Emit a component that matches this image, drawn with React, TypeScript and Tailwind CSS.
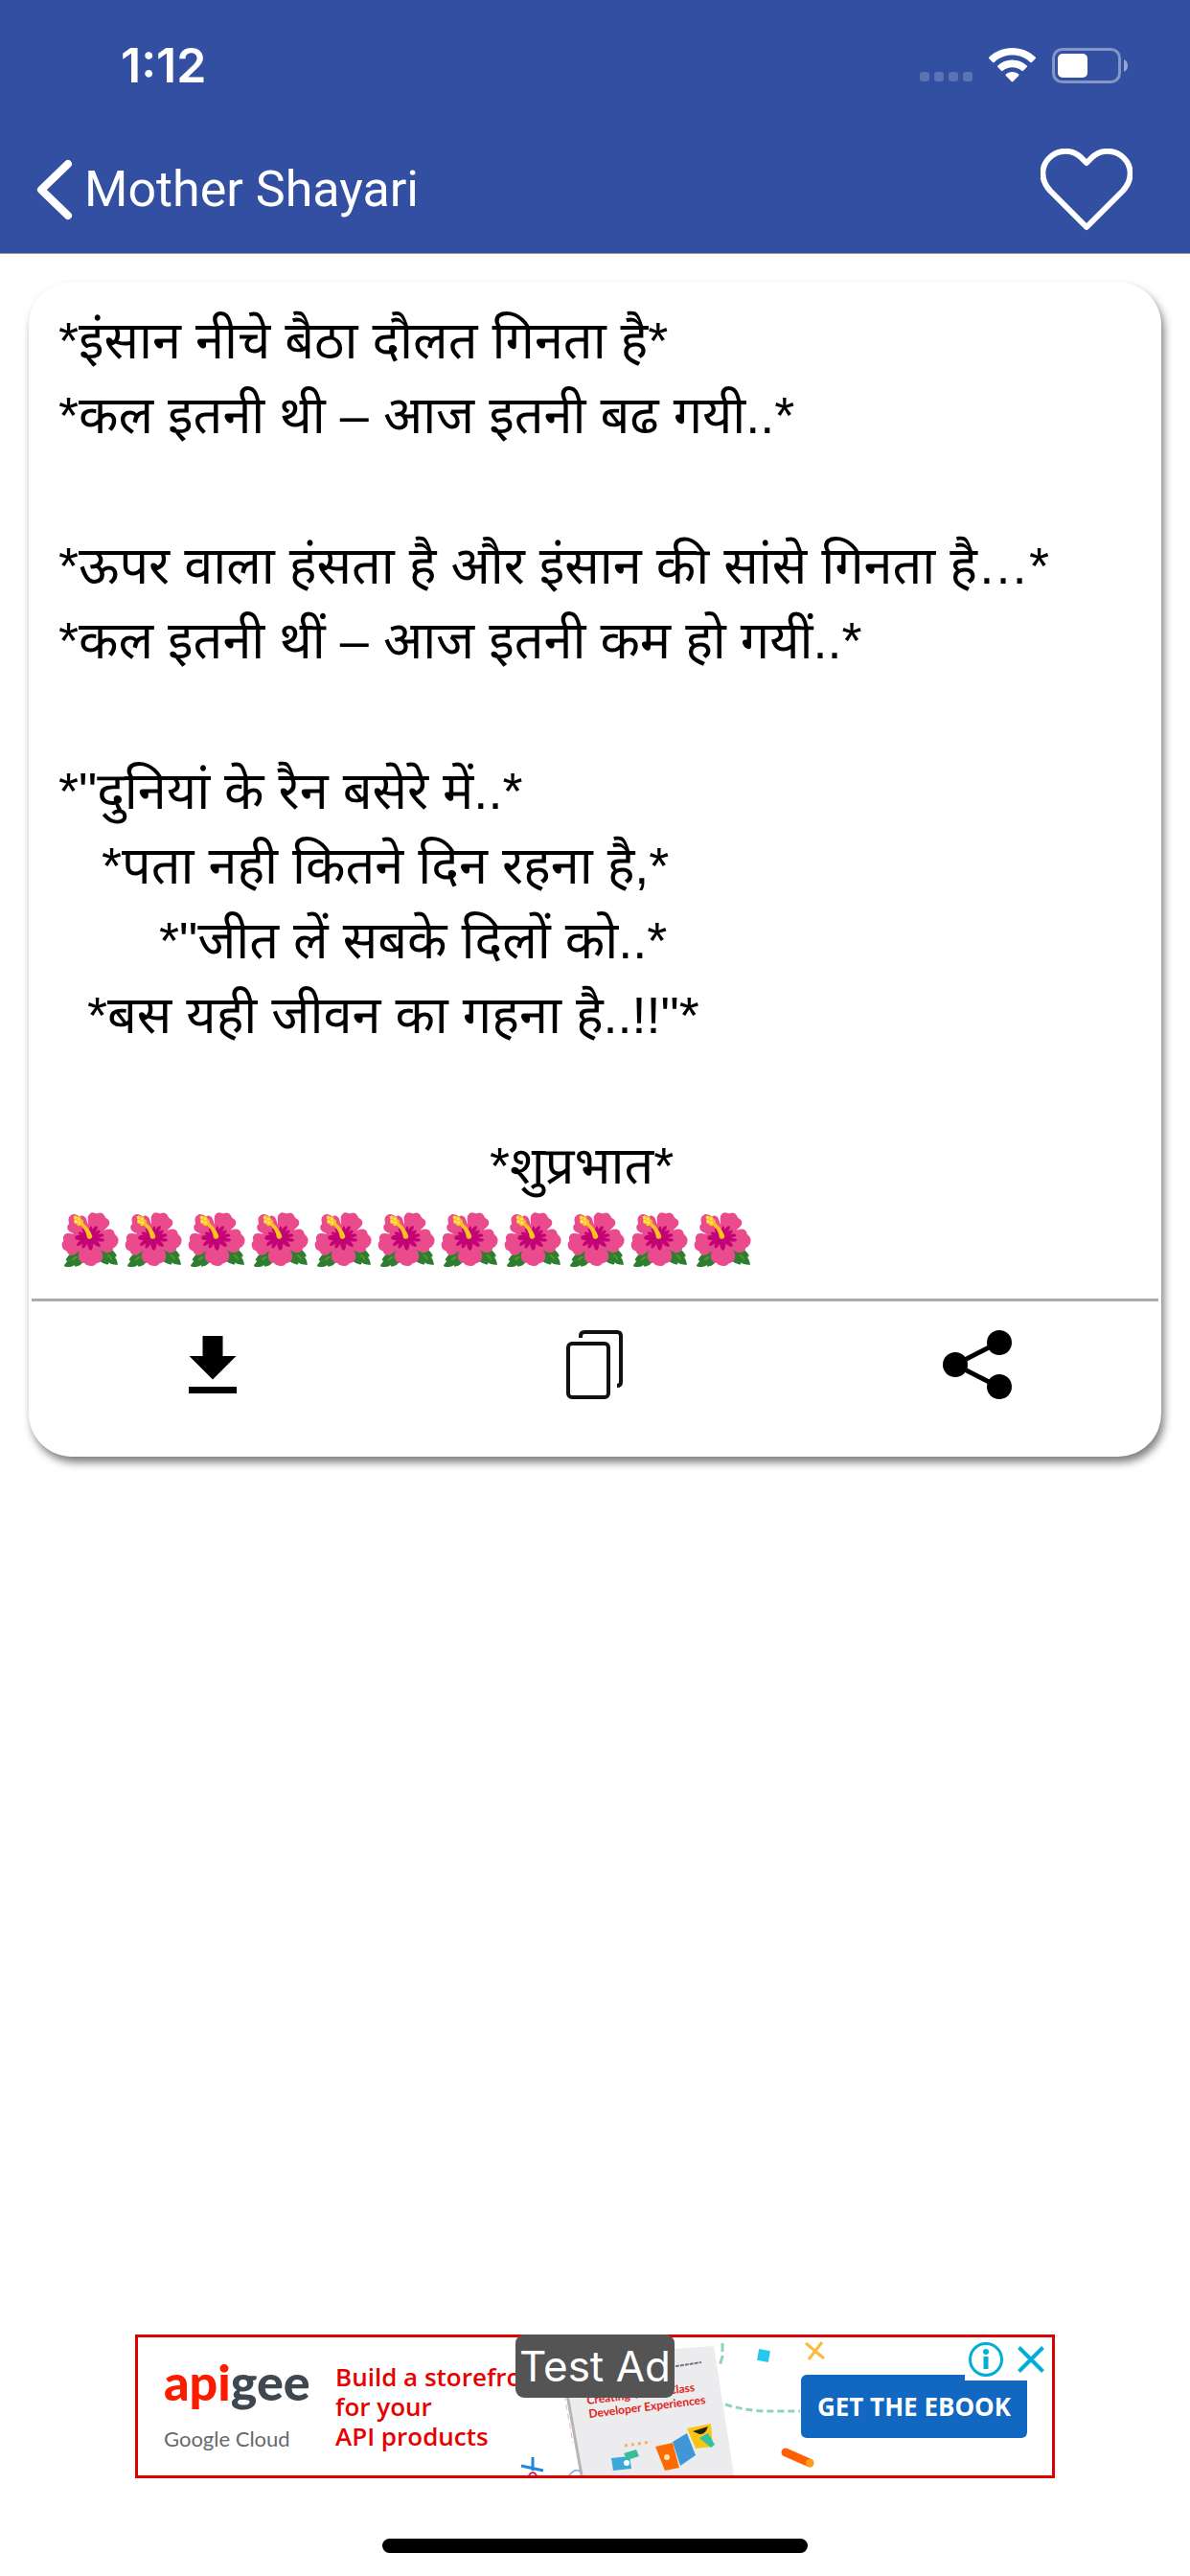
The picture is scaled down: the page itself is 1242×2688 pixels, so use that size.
import React, { useState } from 'react';

const STANZAS = [
  ['*इंसान नीचे बैठा दौलत गिनता है*', '*कल इतनी थी – आज इतनी बढ गयी..*'],
  ['*ऊपर वाला हंसता है और इंसान की सांसे गिनता है…*', '*कल इतनी थीं – आज इतनी कम हो गयीं..*'],
  [
    '*"दुनियां के रैन बसेरे में..*',
    '   *पता नही कितने दिन रहना है,*',
    '       *"जीत लें सबके दिलों को..*',
    '  *बस यही जीवन का गहना है..!!"*',
  ],
  [' '.repeat(30) + '*शुप्रभात*'],
];

const StatusBar = () => (
  <div className="flex h-[132px] items-center justify-between pt-1 pr-[65px] pl-[126px] text-white">
    <span className="text-[50px] leading-none font-semibold">1:12</span>
    <div className="flex items-center">
      <div className="mt-6 mr-[17px] flex gap-[5px]">
        <span className="size-[10px] rounded-[3px] bg-white/20" />
        <span className="size-[10px] rounded-[3px] bg-white/20" />
        <span className="size-[10px] rounded-[3px] bg-white/20" />
        <span className="size-[10px] rounded-[3px] bg-white/20" />
      </div>
      <svg width="49" height="36" viewBox="0 0 49 36" fill="white" className="mr-[17px]">
        <path d="M24.5 0C34 0 42.500 3.700 48.600 9.600Q49.400 10.400 48.600 11.300L45 14.900Q44.200 15.700 43.300 14.900C38.300 10.300 31.700 7.600 24.500 7.600C17.300 7.600 10.700 10.300 5.700 14.900Q4.800 15.700 4 14.900L.4 11.300Q-.4 10.400 .4 9.600C6.500 3.700 15 0 24.500 0Z" />
        <path d="M24.500 12.500C30.500 12.500 35.700 14.800 39.700 18.400Q40.500 19.300 39.700 20.100L36 23.800Q35.200 24.600 34.300 23.800C31.700 21.600 28.300 20.200 24.500 20.200C20.700 20.200 17.300 21.600 14.700 23.800Q13.800 24.600 13 23.800L9.300 20.100Q8.500 19.300 9.300 18.400C13.300 14.800 18.500 12.500 24.500 12.500Z" />
        <path d="M24.500 25C27.200 25 29.500 25.900 31.200 27.400Q32 28.200 31.200 29L25.300 35Q24.500 35.800 23.700 35L17.800 29Q17 28.200 17.800 27.400C19.500 25.900 21.800 25 24.500 25Z" />
      </svg>
      <svg width="79" height="37" viewBox="0 0 79 37">
        <rect x="1.500" y="1.500" width="69" height="34" rx="9" fill="none" stroke="white" strokeOpacity="0.4" strokeWidth="3" />
        <rect x="6" y="6" width="31" height="25" rx="5" fill="white" />
        <path d="M75 12Q79 14 79 18.500Q79 23 75 25Z" fill="white" fillOpacity="0.5" />
      </svg>
    </div>
  </div>
);

const AdBanner = () => (
  <section
    aria-label="Advertisement"
    className="relative mx-auto flex h-[150px] w-full max-w-[960px] items-center border-[3px] border-[#dc0000] bg-white pr-[26px] pl-[27px]"
  >
    <svg className="absolute inset-0" width="954" height="144" viewBox="0 0 954 144">
      <g transform="translate(396 0)">
        <path d="M45 20L205 9L226 144H67Z" fill="#ececee" />
        <path d="M45 20L67 144" stroke="#b5b5b8" strokeWidth="3" fill="none" />
        <path d="M49 60L58 110" stroke="#e6b8b8" strokeWidth="1" fill="none" strokeDasharray="6 4" />
        <g fontFamily="Lato, sans-serif" fontWeight="700">
          <text transform="translate(73 70) rotate(-7)" fontSize="12" fill="#e2231a">Creating World-Class</text>
          <text transform="translate(75 84) rotate(-7)" fontSize="12" fill="#e2231a">Developer Experiences</text>
        </g>
        <path d="M160 31L192 26" stroke="#77777c" strokeWidth="2" strokeDasharray="4 1" />
        <path d="M214 6L214 20L211 30" stroke="#8fd3bd" strokeWidth="3" strokeDasharray="9 4" fill="none" />
        <path d="M217 70Q240 77 262 77H295" stroke="#8fd3bd" strokeWidth="3" strokeDasharray="7 4" fill="none" />
        <rect x="251" y="13" width="12" height="12" fill="#27c8ef" transform="rotate(10 257 19)" />
        <path d="M301 6L320 22M318 5L304 23" stroke="#f7bd3b" strokeWidth="3" />
        <path d="M280 120L305 131" stroke="#ff5f00" strokeWidth="9" strokeLinecap="round" />
        <circle cx="305" cy="131" r="4" fill="#ff9e1b" />
        <path d="M112 113L140 109" stroke="#f3b06a" strokeWidth="3" strokeDasharray="3 4" />
        <path d="M98 126L117 124L119 137L100 139Z" fill="#3aa9d8" />
        <path d="M111 121L124 117L127 124L115 128Z" fill="#35bf9b" />
        <circle cx="114" cy="131" r="3" fill="white" />
        <path d="M144 114L162 110L169 136L154 139Z" fill="#ff6a00" />
        <circle cx="156" cy="125" r="3" fill="#ffe0b0" />
        <path d="M162 109L177 100L186 123L170 134Z" fill="#3f97d8" />
        <path d="M177 95L202 90L204 114L186 116Z" fill="#f9c613" />
        <path d="M183 98L199 93Q196 102 190 101Z" fill="#26221a" />
        <path d="M190 105L199 100L206 112L202 115Z" fill="#2fc3a4" />
        <path d="M4 134L27 139M16 125V139" stroke="#1e88dd" strokeWidth="3" />
        <path d="M12 144Q16 138 20 144" stroke="#c03060" strokeWidth="2" fill="none" />
        <path d="M54 144Q60 136 66 140" stroke="#8db8dd" strokeWidth="2" fill="none" />
      </g>
    </svg>

    <div className="relative w-[179px] pb-1 font-[Lato,sans-serif]">
      <div className="text-[52px] leading-[52px] font-black text-[#3f4850]">
        <span className="text-[#fb1c00]">api</span>gee
      </div>
      <div className="mt-5 text-[22px] leading-[28px] text-[#66696d]">Google Cloud</div>
    </div>
    <p className="relative w-[190px] font-['Open_Sans',sans-serif] text-[26px] leading-[31px] font-semibold whitespace-nowrap text-[#e60000]">
      Build a storefro
      <br />
      for your
      <br />
      API products
    </p>
    <button className="relative ml-auto h-[66px] w-[236px] rounded-[6px] bg-[#1267c0] font-['Open_Sans',sans-serif] text-[26px] font-bold whitespace-nowrap text-white">
      GET THE EBOOK
    </button>

    <div className="absolute top-0 right-0 flex h-[45px] w-[91px] items-center justify-between bg-white pr-[8px] pl-[4px]">
      <button aria-label="Ad information">
        <svg width="36" height="36" viewBox="0 0 36 36" fill="#00aed6">
          <circle cx="18" cy="18" r="16.500" fill="none" stroke="#00aed6" strokeWidth="3" />
          <circle cx="18" cy="10" r="3" />
          <rect x="15.500" y="15" width="5" height="13" />
        </svg>
      </button>
      <button aria-label="Close ad">
        <svg width="28" height="28" viewBox="0 0 28 28" stroke="#00aed6" strokeWidth="4">
          <path d="M1.500 1.500L26.500 26.500M26.500 1.500L1.500 26.500" />
        </svg>
      </button>
    </div>
    <span className="absolute -top-[3px] left-1/2 flex h-[66px] w-[166px] -translate-x-1/2 items-center justify-center rounded-[9px] bg-[#545454] text-[44px] leading-none whitespace-nowrap text-white">
      Test Ad
    </span>
  </section>
);

export default function App() {
  const [liked, setLiked] = useState(false);

  return (
    <div className="flex min-h-screen flex-col bg-white font-[Inter,'Noto_Sans',sans-serif]">
      <header className="border-b border-[#9a9a9a] bg-[#324fa1]">
        <StatusBar />
        <div className="flex h-[132px] items-center justify-between pr-[60px] pl-[38px]">
          <button className="flex items-center gap-3 text-white">
            <svg width="38" height="64" viewBox="0 0 38 64" fill="none" stroke="white" strokeWidth="8" strokeLinecap="round" strokeLinejoin="round">
              <path d="M33 5L5 32L33 59" />
            </svg>
            <span className="font-[Roboto,sans-serif] text-[52px] leading-none">Mother Shayari</span>
          </button>
          <button aria-label="Favourite" aria-pressed={liked} onClick={() => setLiked(!liked)}>
            <svg width="96" height="86" viewBox="0 0 96 86" fill={liked ? 'white' : 'none'} stroke="white" strokeWidth="6" strokeLinejoin="round">
              <path d="M48 82L10 44C-1 32 1 18 9 10C19 0 33 1 42 9L48 15L54 9C63 1 77 0 87 10C95 18 97 32 86 44Z" />
            </svg>
          </button>
        </div>
      </header>

      <main className="px-[30px] pt-[29px]">
        <article className="rounded-[45px] bg-white shadow-[3px_6px_9px_rgba(0,0,0,0.5)]">
          <div className="px-[31px] pt-[22px] pb-[22px] font-['Liberation_Sans','Noto_Sans_Devanagari',sans-serif] leading-[78px] whitespace-pre text-black">
            <div className="flex flex-col gap-[79px] text-[54px]">
              {STANZAS.map((lines, i) => (
                <div key={i}>
                  {lines.map((line) => (
                    <p key={line} className="h-[78px]">{line}</p>
                  ))}
                </div>
              ))}
            </div>
            <p className="h-[78px] text-[53px]">{'🌺'.repeat(11)}</p>
          </div>
          <hr className="mx-[3px] border-t-[3px] border-[#aaaaaa]" />
          <div className="flex h-[162px] items-start justify-between px-[156px] pt-[30px]">
            <button aria-label="Download">
              <svg width="72" height="72" viewBox="0 0 72 72" fill="black">
                <path d="M25.500 6H46.500V27H60.500L36 51.500L11.500 27H25.500Z" />
                <rect x="11" y="59" width="50" height="7" />
              </svg>
            </button>
            <button aria-label="Copy">
              <svg width="72" height="72" viewBox="0 0 72 72" fill="none" stroke="#111" strokeWidth="4">
                <rect x="8" y="14" width="42" height="56" rx="4" />
                <path d="M21 8V6Q21 2 25 2H59Q63 2 63 6V54Q63 58 59 58" />
              </svg>
            </button>
            <button aria-label="Share">
              <svg width="72" height="72" viewBox="0 0 72 72" fill="black">
                <path d="M13 36L58 13M13 36L58 59" stroke="black" strokeWidth="5" />
                <circle cx="13" cy="36" r="13" />
                <circle cx="59" cy="13" r="13" />
                <circle cx="59" cy="59" r="13" />
              </svg>
            </button>
          </div>
        </article>
      </main>

      <footer className="mt-auto px-5">
        <AdBanner />
        <div className="flex h-[102px] items-end justify-center pb-[24px]">
          <div className="h-[15px] w-[444px] rounded-full bg-black" />
        </div>
      </footer>
    </div>
  );
}
